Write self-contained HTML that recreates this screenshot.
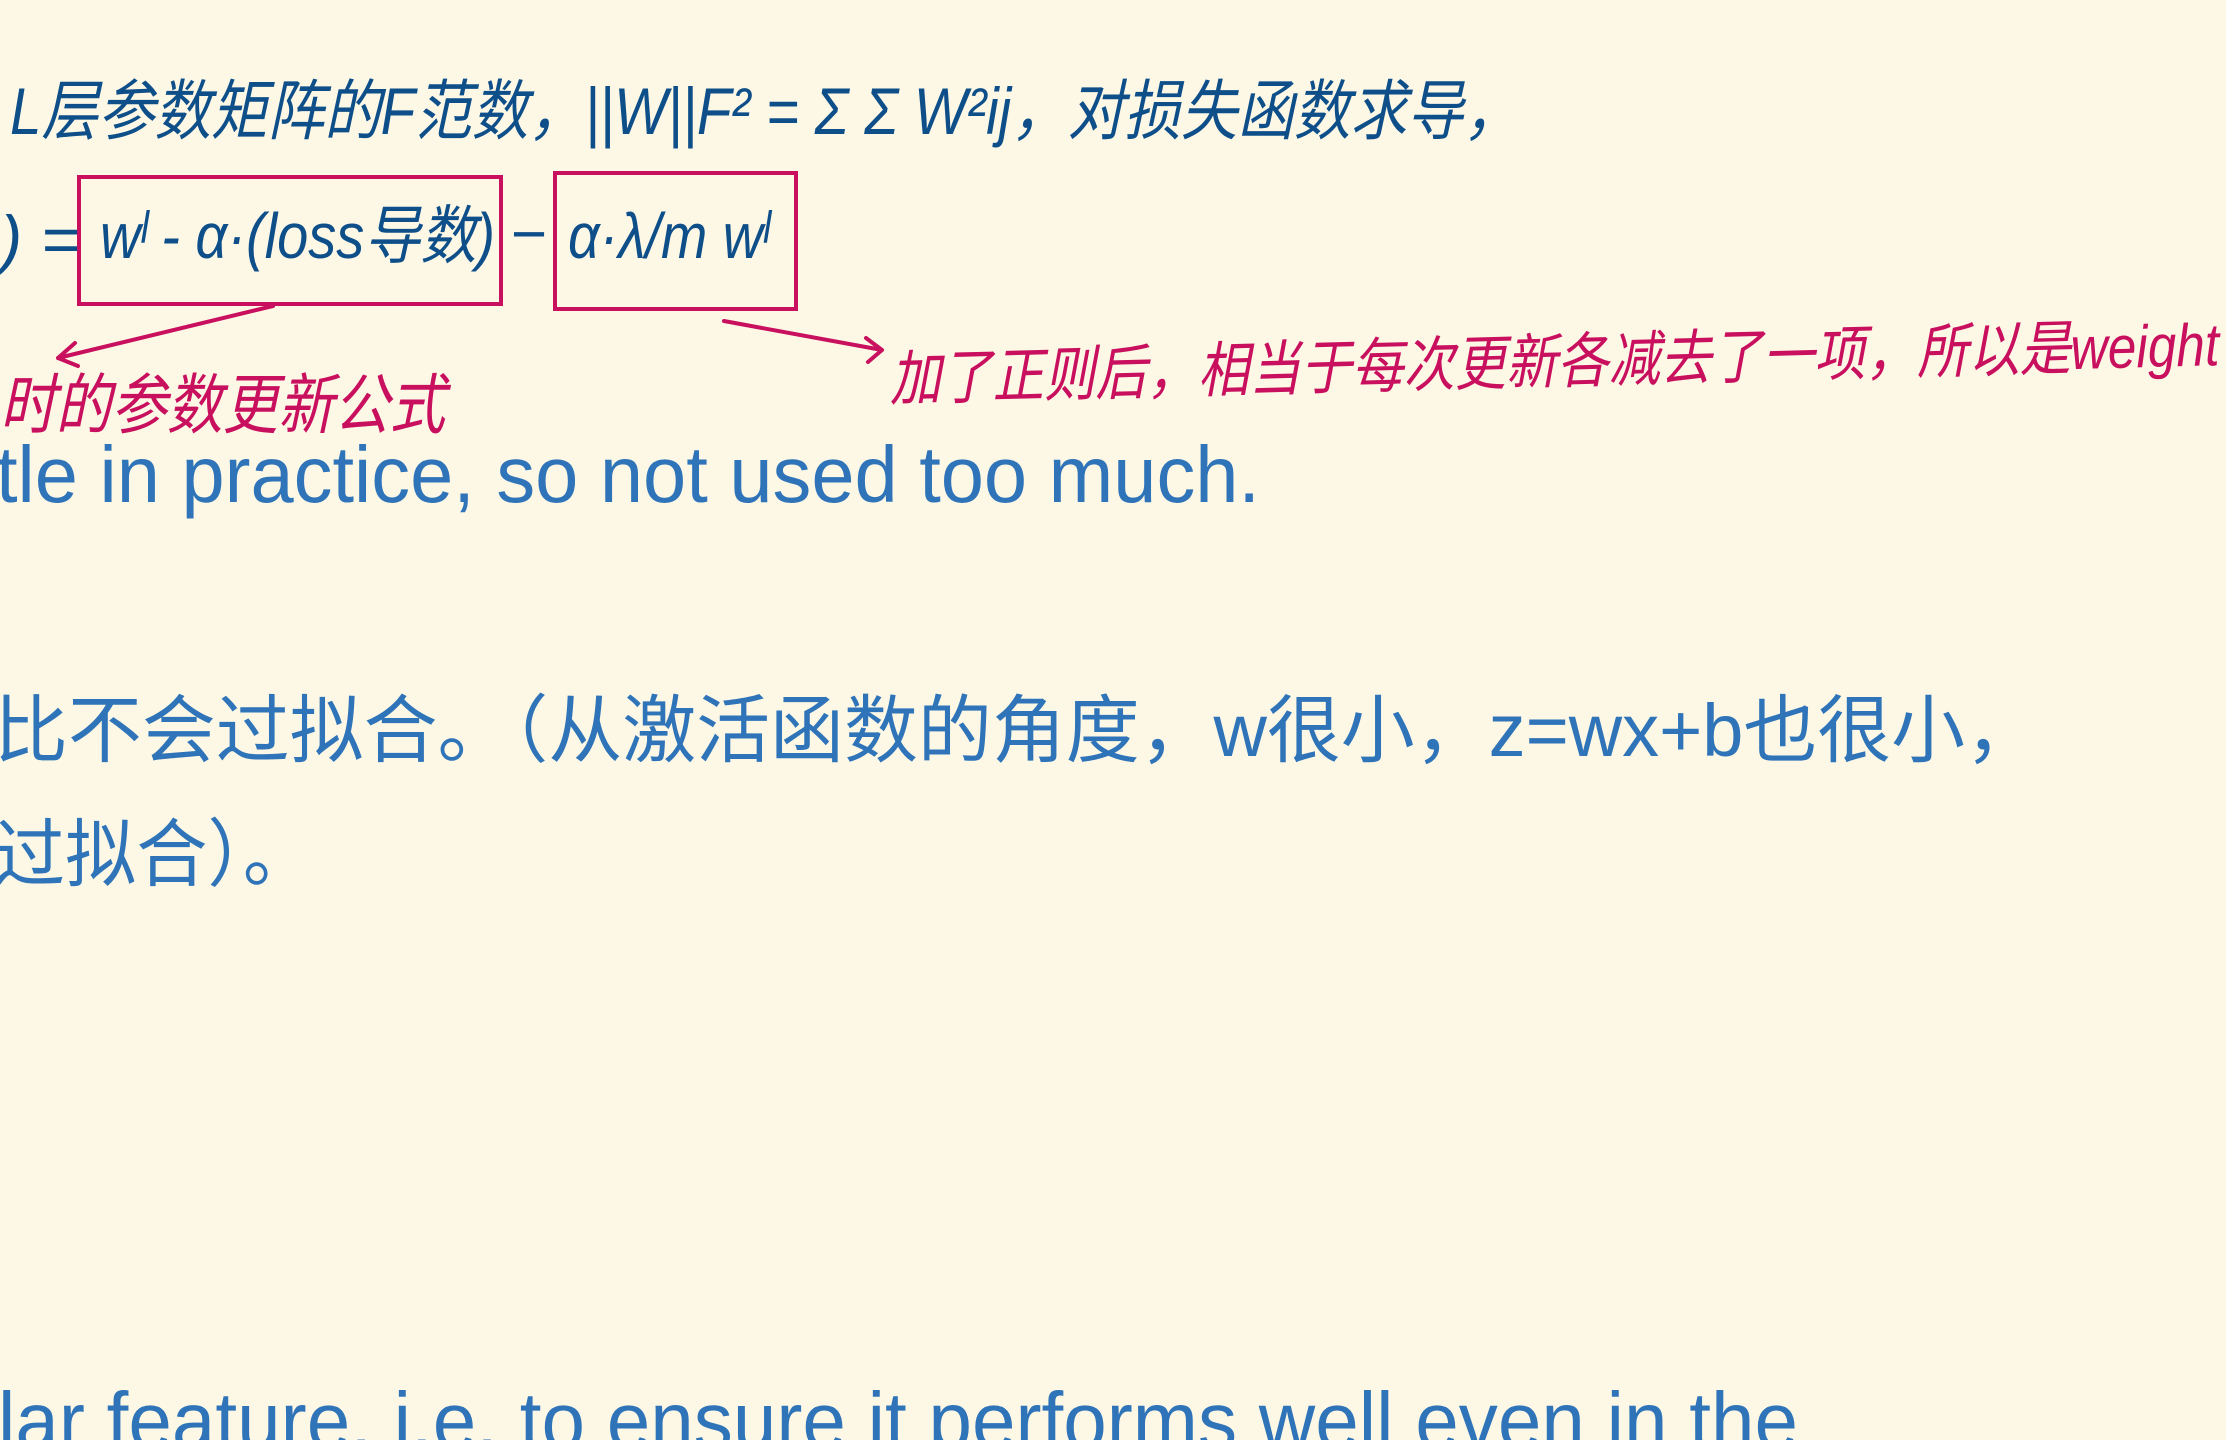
<!DOCTYPE html>
<html><head><meta charset="utf-8"><style>
html,body{margin:0;padding:0;width:2226px;height:1440px;overflow:hidden;background:#fdf8e6}
svg{display:block}
.b{fill:#2f74b8;font-family:"Liberation Sans","Noto Sans CJK SC",sans-serif}
.n{fill:#0e4f8a;font-family:"Liberation Sans","Noto Sans CJK SC",sans-serif;font-style:italic}
.m{fill:#c8105e;font-family:"Liberation Sans","Noto Sans CJK SC",sans-serif;font-style:italic}
</style></head><body>
<svg width="2226" height="1440" viewBox="0 0 2226 1440" xmlns="http://www.w3.org/2000/svg">
<rect width="2226" height="1440" fill="#fdf8e6"/>
<text class="n" x="10" y="134" font-size="66" textLength="1510" lengthAdjust="spacingAndGlyphs">L层参数矩阵的F范数，||W||F² = Σ Σ W²ij，对损失函数求导，</text>
<text class="n" x="0" y="262" font-size="66" textLength="80" lengthAdjust="spacingAndGlyphs">) =</text>
<text class="n" x="100" y="258" font-size="64" textLength="395" lengthAdjust="spacingAndGlyphs">wˡ - α·(loss导数)</text>
<text class="n" x="510" y="255" font-size="62">−</text>
<text class="n" x="568" y="258" font-size="64" textLength="200" lengthAdjust="spacingAndGlyphs">α·λ/m wˡ</text>
<rect x="79" y="177" width="422" height="127" fill="none" stroke="#c8105e" stroke-width="4"/>
<rect x="555" y="173" width="241" height="136" fill="none" stroke="#c8105e" stroke-width="4"/>
<g stroke="#c8105e" stroke-width="4" fill="none" stroke-linecap="round">
<path d="M273 306 L58 358 M58 358 L75 343 M58 358 L78 366"/>
<path d="M724 321 L882 350 M882 350 L866 338 M882 350 L868 362"/>
</g>
<text class="m" x="0" y="428" font-size="66" textLength="445" lengthAdjust="spacingAndGlyphs">时的参数更新公式</text>
<text class="m" x="890" y="400" font-size="60" textLength="1330" lengthAdjust="spacingAndGlyphs" transform="rotate(-1.5 890 398)">加了正则后，相当于每次更新各减去了一项，所以是weight</text>
<text class="b" x="-4" y="502" font-size="80" textLength="1264" lengthAdjust="spacingAndGlyphs">tle in practice, so not used too much.</text>
<text class="b" x="-6" y="756" font-size="74" textLength="2045" lengthAdjust="spacingAndGlyphs">比不会过拟合。（从激活函数的角度，w很小，z=wx+b也很小，</text>
<text class="b" x="-6" y="880" font-size="74" textLength="320" lengthAdjust="spacingAndGlyphs">过拟合）。</text>
<text class="b" x="-2" y="1448" font-size="80" textLength="1800" lengthAdjust="spacingAndGlyphs">lar feature, i.e. to ensure it performs well even in the</text>
</svg>
</body></html>
